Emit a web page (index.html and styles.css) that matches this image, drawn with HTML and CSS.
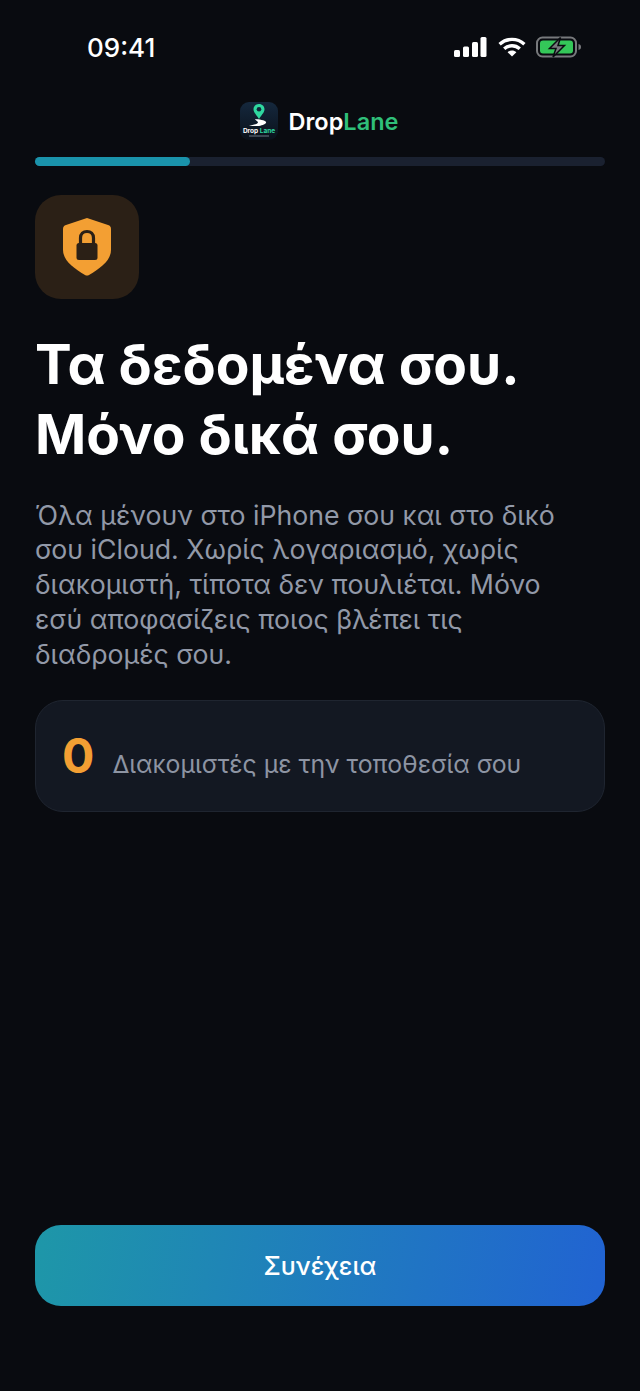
FILE: index.html
```html
<!DOCTYPE html>
<html lang="el">
<head>
  <meta charset="UTF-8" />
  <meta name="viewport" content="width=device-width, initial-scale=1.0" />
  <title>DropLane</title>
  <link rel="stylesheet" href="styles.css">
</head>
<body>
  <main class="screen">
    <div class="status-bar">
      <span class="status-time">09:41</span>
      <div class="status-icons">
        <svg class="status-signal" width="34" height="20" viewBox="0 0 34 20" fill="#fff">
          <rect x="1" y="13" width="6" height="7" rx="1.5"/>
          <rect x="10" y="9.5" width="6" height="10.5" rx="1.5"/>
          <rect x="19" y="5" width="6" height="15" rx="1.5"/>
          <rect x="27.5" y="0" width="6" height="20" rx="1.5"/>
        </svg>
        <svg width="28" height="20" viewBox="0 0 28 20" fill="none" stroke="#fff" stroke-width="3.4">
          <path d="M1.6 7.2C8.6 .8 19.4 .8 26.4 7.2"/>
          <path d="M6.2 11.8C10.8 7.8 17.2 7.8 21.8 11.8"/>
          <path d="M9.6 15.2 14 19.6l4.4-4.4C15.8 13 12.2 13 9.6 15.2Z" fill="#fff" stroke="none"/>
        </svg>
        <svg width="46" height="22" viewBox="0 0 46 22" fill="none">
          <rect x="1" y="1.5" width="39" height="19" rx="5.5" stroke="#77797c" stroke-width="2"/>
          <rect x="4" y="4.5" width="33" height="13" rx="3" fill="#34c759"/>
          <path d="M42.5 8c1.8.4 2.5 1.5 2.5 3s-.7 2.6-2.5 3Z" fill="#77797c"/>
          <path d="M24.5 1.5 13.5 12.5h6.5L17 21l11.5-11.5H22Z" fill="#77797c" stroke="#090b10" stroke-width="1.5"/>
        </svg>
      </div>
    </div>

    <header class="brand">
      <svg class="brand-logo" width="38" height="38" viewBox="0 0 38 38">
        <defs>
          <linearGradient id="logoBg" x1="0" y1="0" x2="0" y2="1">
            <stop offset="0" stop-color="#15283d"/>
            <stop offset="1" stop-color="#0a111b"/>
          </linearGradient>
        </defs>
        <rect width="38" height="38" rx="9" fill="url(#logoBg)"/>
        <path d="M19 2c-3.2 0-5.5 2.4-5.5 5.3 0 3.4 3.5 6.3 5.5 9.7 2-3.4 5.5-6.3 5.5-9.7C24.5 4.4 22.2 2 19 2Z" fill="#2fd8a0"/>
        <circle cx="19" cy="7.3" r="2.3" fill="#12263a"/>
        <path d="M15 17c4 .4 10 1 11 3 .8 1.7-3 3-7 4H9c3-1 9-2 9-3.5 0-1.2-3-2.5-3-3.5Z" fill="#fff"/>
        <text class="logo-text" x="19" y="30.5" text-anchor="middle"><tspan fill="#fff">Drop</tspan> <tspan fill="#2fd8a0">Lane</tspan></text>
        <rect x="9" y="33.5" width="20" height="1" fill="#6d7886"/>
      </svg>
      <span class="brand-name">Drop<span class="brand-accent">Lane</span></span>
    </header>

    <div class="progress"><div class="progress-fill"></div></div>

    <div class="icon-box">
      <svg width="48" height="58" viewBox="0 0 48 58">
        <path d="M24 0 45 7c2 .7 3 1.8 3 4v21c0 10-10 18-22 25-1.4.8-2.6.8-4 0C10 50 0 42 0 32V11c0-2.200 1-3.300 3-4Z" fill="#f39f33"/>
        <rect x="13.5" y="25" width="21" height="17" rx="2.5" fill="#2b2016"/>
        <path d="M17.5 26v-6c0-4 2.8-6.5 6.5-6.5s6.5 2.500 6.5 6.500v6" fill="none" stroke="#2b2016" stroke-width="3.2"/>
      </svg>
    </div>

    <h1 class="title">Τα δεδομένα σου.<br>Μόνο δικά σου.</h1>

    <p class="description">Όλα μένουν στο iPhone σου και στο δικό σου iCloud. Χωρίς λογαριασμό, χωρίς διακομιστή, τίποτα δεν πουλιέται. Μόνο εσύ αποφασίζεις ποιος βλέπει τις διαδρομές σου.</p>

    <div class="stat-card">
      <span class="stat-value">0</span>
      <span class="stat-label">Διακομιστές με την τοποθεσία σου</span>
    </div>

    <button class="continue-btn" type="button">Συνέχεια</button>
  </main>
</body>
</html>
```

FILE: styles.css
```css
html, body {
  margin: 0;
  background: #090b10;
}

body {
  font-family: Inter, "Noto Sans", sans-serif;
  color: #fff;
}

.screen {
  box-sizing: border-box;
  height: 1391px;
  padding: 0 35px 85px;
  display: flex;
  flex-direction: column;
  overflow: hidden;
}

.status-bar {
  height: 102px;
  display: flex;
  justify-content: space-between;
  align-items: flex-start;
  padding: 34px 23px 0 52px;
  box-sizing: border-box;
  flex-shrink: 0;
}

.status-time {
  font-size: 26px;
  font-weight: 500;
  line-height: 28px;
}

.status-icons {
  display: flex;
  align-items: center;
  gap: 10px;
  height: 26px;
}

.status-signal {
  margin-right: 1px;
}

.brand {
  height: 38px;
  padding-right: 2px;
  display: flex;
  justify-content: center;
  align-items: center;
  gap: 11px;
}

.brand-logo {
  display: block;
}

.logo-text {
  font-size: 6.5px;
  font-weight: 700;
}

.brand-name {
  font-size: 23.5px;
  font-weight: 600;
  margin-top: 1px;
}

.brand-accent {
  color: #2fbf79;
}

.progress {
  height: 9px;
  margin-top: 17px;
  background: #1a2130;
  border-radius: 5px;
}

.progress-fill {
  width: 155px;
  height: 100%;
  background: #1a93ab;
  border-radius: 5px;
}

.icon-box {
  width: 104px;
  height: 104px;
  margin-top: 29px;
  background: #2b2016;
  border-radius: 26px;
  display: flex;
  justify-content: center;
  align-items: center;
}

.title {
  margin: 30px 0 0;
  font-size: 55px;
  font-weight: 700;
  line-height: 70px;
}

.description {
  margin: 28.5px 0 0;
  max-width: 550px;
  color: #9299a8;
  font-size: 26.7px;
  line-height: 34.75px;
}

.stat-card {
  box-sizing: border-box;
  height: 112px;
  margin-top: 28.5px;
  padding: 0 26px;
  display: flex;
  align-items: center;
  gap: 18px;
  background: #131822;
  border: 1px solid #1f2530;
  border-radius: 28px;
}

.stat-value {
  color: #f39f33;
  font-size: 48px;
  font-weight: 700;
}

.stat-label {
  margin-top: 16px;
  color: #8d94a3;
  font-size: 24.8px;
}

.continue-btn {
  height: 81px;
  margin-top: auto;
  border: 0;
  border-radius: 26px;
  background: linear-gradient(100deg, #1e97a8, #2163d2);
  color: #fff;
  font-family: inherit;
  font-size: 25px;
  font-weight: 500;
}
```
